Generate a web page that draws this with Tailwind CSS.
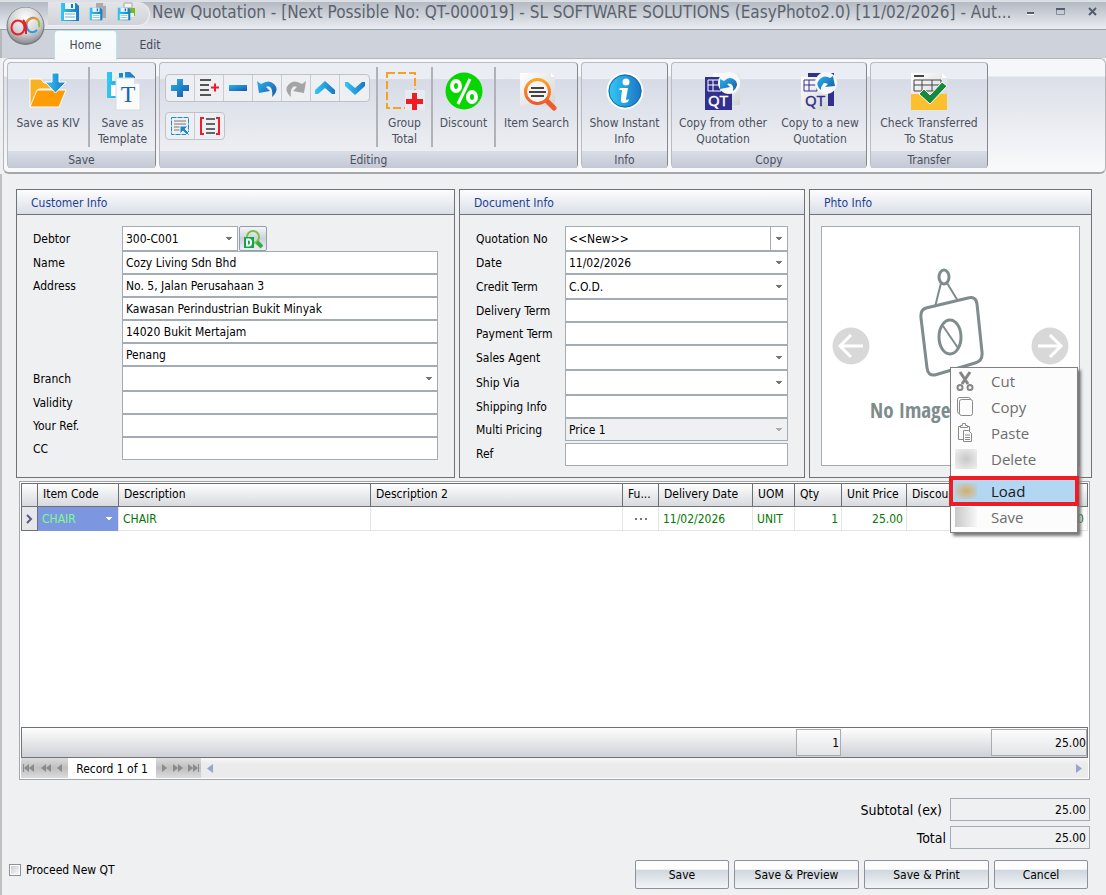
<!DOCTYPE html>
<html lang="en">
<head>
  <meta charset="UTF-8" />
  <meta name="viewport" content="width=device-width, initial-scale=1.0" />
  <title>New Quotation</title>
  <script src="https://cdn.jsdelivr.net/npm/@tailwindcss/browser@4"></script>
</head>
<body class="min-h-screen flex flex-col bg-[#eff0f2] text-black text-[12px] leading-4 font-['DejaVu_Sans_Condensed','DejaVu_Sans',sans-serif]">

  <!-- Shared shapes -->
  <svg class="absolute w-0 h-0">
    <defs>
      <linearGradient id="blue" x1="0" y1="0" x2="1" y2="1"><stop offset="0" stop-color="#27b4ee"/><stop offset="1" stop-color="#1a56a5"/></linearGradient>
      <linearGradient id="sky" x1="0" y1="0" x2="1" y2="0"><stop offset="0" stop-color="#35c8f4"/><stop offset="1" stop-color="#1976c4"/></linearGradient>
      <linearGradient id="orange" x1="0" y1="0" x2="0" y2="1"><stop offset="0" stop-color="#fba52b"/><stop offset="1" stop-color="#ee5a2a"/></linearGradient>
      <linearGradient id="sheet" x1="0" y1="0" x2="1" y2="1"><stop offset="0" stop-color="#ffffff"/><stop offset="1" stop-color="#d3d4d6"/></linearGradient>
      <radialGradient id="metal" cx="0.5" cy="0.3" r="0.7"><stop offset="0" stop-color="#ffffff"/><stop offset="0.6" stop-color="#d3d3d5"/><stop offset="1" stop-color="#8d8e92"/></radialGradient>
    </defs>
    <symbol id="caret" viewBox="0 0 6 4"><path d="M0 0h6v1H5v1H4v1H2V2H1V1H0z" fill="currentColor"/></symbol>
    <symbol id="floppy" viewBox="0 0 20 20"><path d="M1 1h15l3 3v15H1z" fill="url(#sky)"/><path d="M5 1h10v6H5z" fill="#e9f6fd"/><path d="M11 2h2v4h-2z" fill="#1976c4"/><path d="M4 10h12v8H4z" fill="#fff"/><path d="M5 12h10M5 15h10" stroke="#55b6e6"/></symbol>
  </svg>

  <!-- Title bar -->
  <header class="relative h-[30px] shrink-0 flex items-start border-b border-[#9ba1ab] bg-linear-to-b from-[#b4bac3] to-[#eaedf3] border-t-2 border-t-[#dcdfe3]">
    <button aria-label="Application menu" class="absolute left-1.5 top-1 z-10">
      <svg width="40" height="40" viewBox="0 0 40 40"><circle cx="19.500" cy="20" r="19" fill="#77797d"/><circle cx="19.500" cy="19.500" r="18" fill="url(#metal)"/><g fill="none" stroke-width="2"><path d="M31 24q-4 4-8 1-4-4-2-9 3-5 8-4" stroke="#2b9be0"/><path d="M20 18q2-6 8-6 2 0 4 2" stroke="#f08a24"/><path d="M32 14q2 3 1 7" stroke="#8cc63f"/><ellipse cx="12" cy="21.500" rx="6.500" ry="7" stroke="#e8202b"/><path d="M17 14q3 3 3 8v6" stroke="#e8202b"/></g></svg>
    </button>
    <div class="ml-12 h-6 w-[102px] shrink-0 flex items-start gap-2 pl-3 rounded-r-full bg-linear-to-b from-[#e3e5e8] to-[#d0d3d8] border border-l-0 border-t-0 border-[#f1f2f4]">
      <button aria-label="Save"><svg width="20" height="20"><use href="#floppy"/></svg></button>
      <button aria-label="Save and copy"><svg width="20" height="20" viewBox="0 0 20 20"><path d="M8 1h7l3 3v12H8z" fill="#a9abae"/><path d="M15 1v3h3" fill="#dcdddf"/><svg x="1" y="5" width="14" height="14"><use href="#floppy"/></svg></svg></button>
      <button aria-label="Save and print"><svg width="20" height="20" viewBox="0 0 20 20"><path d="M8 1h8v5H8z" fill="#f4f4f4" stroke="#a5a5a5"/><path d="M6 6h13v8H6z" fill="#76b82a"/><path d="M11 11h7v4h-7z" fill="#e8f2dc"/><svg x="1" y="5" width="14" height="14"><use href="#floppy"/></svg></svg></button>
    </div>
    <h1 class="flex-1 min-w-0 pl-0.5 truncate text-[17px] leading-5 text-[#5c636d]">New Quotation - [Next Possible No: QT-000019] - SL SOFTWARE SOLUTIONS (EasyPhoto2.0) [11/02/2026] - Aut...</h1>
    <div class="flex items-center gap-5 h-5 pl-3 pr-2 text-[#535d6d]">
      <button aria-label="Minimize"><svg width="10" height="10"><path d="M2 5h7v2H2z" fill="currentColor"/><path d="M2 7h7v1H2z" fill="#fff"/></svg></button>
      <button aria-label="Maximize"><svg width="12" height="10"><path d="M1.500 1.500h8v6h-8z" fill="none" stroke="#858d9a"/><path d="M1 1h9v2H1z" fill="currentColor"/></svg></button>
      <button aria-label="Close"><svg width="11" height="10"><path d="M2 1l7 7M9 1L2 8" stroke="currentColor" stroke-width="2"/></svg></button>
    </div>
  </header>

  <!-- Tabs -->
  <nav class="h-7 shrink-0 flex items-start pl-[54px] bg-[#ced2db] border-l-2 border-[#b5b7bb] text-[#454a57]">
    <button class="relative z-10 h-[30px] w-[63px] -ml-0.5 pb-0.5 rounded-t border border-b-0 border-[#b9e3e6] bg-linear-to-b from-[#f7fdfd] to-[#f6f8fa]">Home</button>
    <button class="h-[30px] w-[66px]">Edit</button>
  </nav>

  <!-- Ribbon -->
  <section class="h-[116px] shrink-0 ml-[3px] p-[3px] pb-1 flex gap-[3px] rounded-md border border-[#b3b5b9] border-b-2 border-b-[#a5a6a9] bg-linear-to-b from-[#f6f7fa] from-15% via-[#dbdfe8] via-16% to-[#fafafb] text-[#4c505d] text-center">

    <div class="w-[149px] flex flex-col rounded-sm border border-[#b9bbc1] border-r-[#86888d] border-b-[#86888d] bg-linear-to-b from-[#eaedf3] from-15% via-[#d6dbe6] via-16% to-[#f2f3f5]">
      <div class="flex-1 flex py-1">
        <button class="w-20 flex flex-col items-center gap-1 pt-1">
          <svg width="40" height="40" viewBox="0 0 40 40"><path d="M2 8h11l3 4h15v6H11L4 35H2z" fill="#f9b122" stroke="#fff"/><path d="M9 19h29l-7 17H2z" fill="#ff9c05" stroke="#fff"/><path d="M24 2h7v9h7L27.500 22 17 11h7z" fill="url(#sky)" stroke="#fff"/></svg>
          <span>Save as KIV</span>
        </button>
        <div class="w-0.5 bg-[#b0b2b8]"></div>
        <button class="flex-1 flex flex-col items-center gap-1 pt-1">
          <svg width="40" height="40" viewBox="0 0 40 40"><path d="M4 1h23l5 5v21H4z" fill="url(#sky)"/><path d="M9 1h13v9H9z" fill="#e4f2fa"/><path d="M16 2h4v6h-4z" fill="#1f86cd"/><path d="M8 14h12v11H8z" fill="#fff"/><path d="M13 7h18l6 6v26H13z" fill="#fafbfc" stroke="#d8dadd"/><path d="M31 7v6h6" fill="#dfe1e4"/><text x="25" y="31" text-anchor="middle" font-family="Liberation Serif,serif" font-size="24" fill="#1b66ae">T</text></svg>
          <span>Save as<br>Template</span>
        </button>
      </div>
      <div class="h-[17px] leading-[18px] bg-linear-to-b from-[#d9dde7] to-[#c4c8d3]">Save</div>
    </div>

    <div class="w-[419px] flex flex-col rounded-sm border border-[#b9bbc1] border-r-[#86888d] border-b-[#86888d] bg-linear-to-b from-[#eaedf3] from-15% via-[#d6dbe6] via-16% to-[#f2f3f5]">
      <div class="flex-1 flex py-1">
        <div class="w-[216px] flex flex-col items-start gap-2.5 pl-[5px] pt-[7px]">
          <div class="flex divide-x divide-[#c9ccd2] border border-[#bfc2c8] rounded-sm bg-[#edeff2]">
            <button aria-label="Add row" class="w-[29px] h-[26px] grid place-items-center"><svg width="20" height="20"><path d="M7 1h6v6h6v6h-6v6H7v-6H1V7h6z" fill="url(#blue)"/></svg></button>
            <button aria-label="Insert row" class="w-[29px] h-[26px] grid place-items-center"><svg width="20" height="20"><path d="M1 2h11M1 7h9M1 12h9M1 17h11" stroke="#555" stroke-width="2"/><path d="M12 9.500h8M16 5.500v8" stroke="#ee1c2a" stroke-width="2"/></svg></button>
            <button aria-label="Remove row" class="w-[29px] h-[26px] grid place-items-center"><svg width="20" height="20"><path d="M1 7h18v6H1z" fill="url(#blue)"/></svg></button>
            <button aria-label="Undo" class="w-[29px] h-[26px] grid place-items-center"><svg width="20" height="20"><path d="M0 3l4 3q8-5 13 0 6 6-2 13 1-6-1-9-2-3-5-1l4 4-11 2z" fill="url(#blue)"/></svg></button>
            <button aria-label="Redo" class="w-[29px] h-[26px] grid place-items-center"><svg width="20" height="20"><path d="M20 3l-4 3Q8 1 3 6q-6 6 2 13-1-6 1-9 2-3 5-1l-4 4 11 2z" fill="#a3a4a6"/></svg></button>
            <button aria-label="Move up" class="w-[29px] h-[26px] grid place-items-center"><svg width="20" height="20"><path d="M10 3l10 9v4h-3l-7-6-7 6H0v-4z" fill="url(#sky)"/></svg></button>
            <button aria-label="Move down" class="w-[29px] h-[26px] grid place-items-center"><svg width="20" height="20"><path d="M10 17L0 8V4h3l7 6 7-6h3v4z" fill="url(#sky)"/></svg></button>
          </div>
          <div class="flex divide-x divide-[#c9ccd2] border border-[#bfc2c8] rounded-sm bg-[#edeff2]">
            <button aria-label="Select rows" class="w-[29px] h-[26px] grid place-items-center"><svg width="20" height="20"><path d="M1.500 1.500h17v17h-17z" fill="none" stroke="#2389cc" stroke-dasharray="5 1"/><path d="M4 5h12M4 8h12M4 11h7M4 14h6" stroke="#777"/><path d="M10 10h8l-3 3 4 4-2 2-4-4-3 3z" fill="#1d87d0" stroke="#edeff2"/></svg></button>
            <button aria-label="Select range" class="w-[29px] h-[26px] grid place-items-center"><svg width="20" height="20"><path d="M4 2H1v16h3M16 2h3v16h-3" fill="none" stroke="#ee1c2a" stroke-width="2"/><path d="M6 3h9M6 8h9M6 13h9M6 17h9" stroke="#666" stroke-width="2"/></svg></button>
          </div>
        </div>
        <div class="w-0.5 bg-[#b0b2b8]"></div>
        <button class="w-[53px] flex flex-col items-center gap-1 pt-1">
          <svg width="40" height="40" viewBox="0 0 40 40"><path d="M2 2h28v35H2z" fill="none" stroke="#faa021" stroke-width="2" stroke-dasharray="8 3"/><path d="M20 19h20v20H20z" fill="#e7eaef"/><path d="M27 22h5v6h6v5h-6v6h-5v-6h-6v-5h6z" fill="#ee1c25"/></svg>
          <span>Group<br>Total</span>
        </button>
        <div class="w-0.5 bg-[#b0b2b8]"></div>
        <button class="w-[61px] flex flex-col items-center gap-1 pt-1">
          <svg width="40" height="40" viewBox="0 0 40 40"><circle cx="20" cy="20" r="18.500" fill="#08d600"/><g fill="none" stroke="#fff" stroke-width="4"><ellipse cx="12" cy="15" rx="4" ry="5"/><ellipse cx="28" cy="26" rx="4" ry="5"/><path d="M26 8L14 33" stroke-width="3"/></g></svg>
          <span>Discount</span>
        </button>
        <div class="w-0.5 bg-[#b0b2b8]"></div>
        <button class="flex-1 flex flex-col items-center gap-1 pt-1">
          <svg width="40" height="40" viewBox="0 0 40 40"><path d="M3 2h31l4 4v29H3z" fill="url(#sheet)"/><path d="M34 2v4h4" fill="#fff"/><path d="M29 29l8 8" stroke="#ee5a2a" stroke-width="5" stroke-linecap="round"/><circle cx="20.500" cy="20.500" r="12" fill="#f4f4f4" stroke="url(#orange)" stroke-width="3"/><path d="M14 17h13M12 21h17M14 25h13" stroke="#444" stroke-width="2"/></svg>
          <span>Item Search</span>
        </button>
      </div>
      <div class="h-[17px] leading-[18px] bg-linear-to-b from-[#d9dde7] to-[#c4c8d3]">Editing</div>
    </div>

    <div class="w-[87px] flex flex-col rounded-sm border border-[#b9bbc1] border-r-[#86888d] border-b-[#86888d] bg-linear-to-b from-[#eaedf3] from-15% via-[#d6dbe6] via-16% to-[#f2f3f5]">
      <div class="flex-1 flex py-1">
        <button class="flex-1 flex flex-col items-center gap-1 pt-1">
          <svg width="40" height="40" viewBox="0 0 40 40"><circle cx="20" cy="20" r="18.500" fill="#fff"/><circle cx="20" cy="20" r="16.500" fill="url(#sky)"/><circle cx="20" cy="20" r="16" fill="none" stroke="#1668b4"/><circle cx="21" cy="11" r="3.500" fill="#fff"/><path d="M15 17h8l-2 11q0 2 3 0l-1 3q-8 3-7-3l1-9h-3z" fill="#fff"/></svg>
          <span>Show Instant<br>Info</span>
        </button>
      </div>
      <div class="h-[17px] leading-[18px] bg-linear-to-b from-[#d9dde7] to-[#c4c8d3]">Info</div>
    </div>

    <div class="w-[196px] flex flex-col rounded-sm border border-[#b9bbc1] border-r-[#86888d] border-b-[#86888d] bg-linear-to-b from-[#eaedf3] from-15% via-[#d6dbe6] via-16% to-[#f2f3f5]">
      <div class="flex-1 flex py-1">
        <button class="w-[102px] flex flex-col items-center gap-1 pt-1">
          <svg width="40" height="40" viewBox="0 0 40 40"><path d="M10 2h27v32H10z" fill="url(#sheet)"/><path d="M2 6h27v33H2z" fill="#32308f"/><path d="M5 9h13v11H5zM5 14h15M10 9v11" fill="none" stroke="#fff"/><circle cx="26" cy="12" r="11" fill="#f7f8f9"/><path d="M17 8l4 2q6-6 12 0 3 5-3 10 1-5-2-7-2-1-4 0l3 3-10 2z" fill="url(#blue)"/><text x="15" y="35" text-anchor="middle" font-family="Open Sans,sans-serif" font-size="15" fill="#fff" stroke="#fff" stroke-width="0.500">QT</text></svg>
          <span>Copy from other<br>Quotation</span>
        </button>
        <button class="flex-1 flex flex-col items-center gap-1 pt-1">
          <svg width="40" height="40" viewBox="0 0 40 40"><path d="M8 2h26v33H8z" fill="#32308f"/><path d="M1 6h27v33H1z" fill="url(#sheet)"/><path d="M4 9h13v11H4zM4 14h15M9 9v11" fill="none" stroke="#32308f"/><circle cx="26" cy="12" r="11" fill="#f7f8f9"/><path d="M33 5l2 10-10 1 3-3q-4-2-5 0-2 2-2 6-6-5-2-10 5-6 11-2z" fill="url(#blue)"/><text x="15" y="35" text-anchor="middle" font-family="Open Sans,sans-serif" font-size="15" fill="#32308f" stroke="#32308f" stroke-width="0.500">QT</text></svg>
          <span>Copy to a new<br>Quotation</span>
        </button>
      </div>
      <div class="h-[17px] leading-[18px] bg-linear-to-b from-[#d9dde7] to-[#c4c8d3]">Copy</div>
    </div>

    <div class="w-[118px] flex flex-col rounded-sm border border-[#b9bbc1] border-r-[#86888d] border-b-[#86888d] bg-linear-to-b from-[#eaedf3] from-15% via-[#d6dbe6] via-16% to-[#f2f3f5]">
      <div class="flex-1 flex py-1">
        <button class="flex-1 flex flex-col items-center gap-1 pt-1">
          <svg width="40" height="40" viewBox="0 0 40 40"><path d="M2 2h31l5 5v20H2z" fill="url(#sheet)"/><path d="M33 2v5h5" fill="#fff"/><path d="M2 23h36v16H2z" fill="#fcc02f"/><path d="M5 5h10" stroke="#444" stroke-width="2"/><path d="M5 9h27v11H5zM5 14h27M13 9v11M23 9v11" fill="none" stroke="#444"/><path d="M10 23l5-5 6 6L33 11l5 4-17 18z" fill="#158a3c" stroke="#fff"/></svg>
          <span>Check Transferred<br>To Status</span>
        </button>
      </div>
      <div class="h-[17px] leading-[18px] bg-linear-to-b from-[#d9dde7] to-[#c4c8d3]">Transfer</div>
    </div>
  </section>

  <main class="flex-1 flex flex-col border-l-2 border-[#bfc0c2] pl-3.5 pr-3.5 pt-[15px]">

    <div class="grid grid-cols-[minmax(0,439fr)_minmax(0,346fr)_minmax(0,283fr)] gap-1 h-[289px]">
      <!-- Customer Info -->
      <section class="border border-[#707276]">
        <h2 class="h-[25px] pl-3.5 leading-[26px] text-[#1c3f94] border-b border-[#707276] bg-linear-to-b from-[#fdfdfe] to-[#d9dee7]">Customer Info</h2>
        <div class="grid grid-cols-[89px_1fr] items-center pl-4 pr-4 pt-[11px]">
          <label for="debtor">Debtor</label>
          <div class="flex gap-px">
            <div class="relative w-[116px]">
              <select id="debtor" class="appearance-none block w-full h-[25px] px-[3px] bg-white border border-[#a3acb5]"><option>300-C001</option></select>
              <svg class="absolute right-1.5 top-[11px] text-[#777]" width="6" height="4"><use href="#caret"/></svg>
            </div>
            <button aria-label="Find debtor" class="w-7 h-[25px] grid place-items-center rounded-xs border border-[#979cab] bg-linear-to-b from-[#f5f6f9] via-[#ccd2dd] to-[#eceef2]"><svg width="20" height="20"><circle cx="10" cy="8" r="6" fill="none" stroke="#7ac043" stroke-width="2"/><path d="M14 13l5 5" stroke="#39a845" stroke-width="4"/><path d="M1 8h10v11H1z" fill="#12a64a"/><path d="M4 10.500h2q2 0 2 3t-2 3H4z" fill="none" stroke="#fff" stroke-width="2"/></svg></button>
          </div>
          <label for="name">Name</label>
          <input id="name" value="Cozy Living Sdn Bhd" class="w-full h-[23px] px-[3px] bg-white border border-[#a3acb5]">
          <label for="address1">Address</label>
          <input id="address1" value="No. 5, Jalan Perusahaan 3" class="w-full h-[23px] px-[3px] bg-white border border-[#a3acb5]">
          <input aria-label="Address line 2" value="Kawasan Perindustrian Bukit Minyak" class="col-start-2 w-full h-[23px] px-[3px] bg-white border border-[#a3acb5]">
          <input aria-label="Address line 3" value="14020 Bukit Mertajam" class="col-start-2 w-full h-[23px] px-[3px] bg-white border border-[#a3acb5]">
          <input aria-label="Address line 4" value="Penang" class="col-start-2 w-full h-[23px] px-[3px] bg-white border border-[#a3acb5]">
          <label for="branch">Branch</label>
          <div class="relative">
            <select id="branch" class="appearance-none block w-full h-[25px] px-[3px] bg-white border border-[#a3acb5]"><option></option></select>
            <svg class="absolute right-1.5 top-[11px] text-[#777]" width="6" height="4"><use href="#caret"/></svg>
          </div>
          <label for="validity">Validity</label>
          <input id="validity" class="w-full h-[23px] px-[3px] bg-white border border-[#a3acb5]">
          <label for="yourref">Your Ref.</label>
          <input id="yourref" class="w-full h-[23px] px-[3px] bg-white border border-[#a3acb5]">
          <label for="cc">CC</label>
          <input id="cc" class="w-full h-[23px] px-[3px] bg-white border border-[#a3acb5]">
        </div>
      </section>

      <!-- Document Info -->
      <section class="border border-[#707276]">
        <h2 class="h-[25px] pl-3.5 leading-[26px] text-[#1c3f94] border-b border-[#707276] bg-linear-to-b from-[#fdfdfe] to-[#d9dee7]">Document Info</h2>
        <div class="grid grid-cols-[89px_1fr] items-center pl-4 pr-4 pt-[11px]">
          <label for="qno">Quotation No</label>
          <div class="flex h-[25px] bg-white border border-[#a3acb5]">
            <input id="qno" value="&lt;&lt;New&gt;&gt;" class="flex-1 min-w-0 px-[3px]">
            <button aria-label="Choose number" class="w-[17px] grid place-items-center border-l border-[#a3acb5] text-[#777]"><svg width="6" height="4"><use href="#caret"/></svg></button>
          </div>
          <label for="date">Date</label>
          <div class="flex h-[23px] bg-white border border-[#a3acb5]">
            <input id="date" value="11/02/2026" class="flex-1 min-w-0 px-[3px]">
            <button aria-label="Choose date" class="w-[17px] grid place-items-center text-[#777]"><svg width="6" height="4"><use href="#caret"/></svg></button>
          </div>
          <label for="credit">Credit Term</label>
          <div class="relative">
            <select id="credit" class="appearance-none block w-full h-[25px] px-[3px] bg-white border border-[#a3acb5]"><option>C.O.D.</option></select>
            <svg class="absolute right-1.5 top-[11px] text-[#777]" width="6" height="4"><use href="#caret"/></svg>
          </div>
          <label for="delivery">Delivery Term</label>
          <input id="delivery" class="w-full h-[23px] px-[3px] bg-white border border-[#a3acb5]">
          <label for="payment">Payment Term</label>
          <input id="payment" class="w-full h-[23px] px-[3px] bg-white border border-[#a3acb5]">
          <label for="agent">Sales Agent</label>
          <div class="relative">
            <select id="agent" class="appearance-none block w-full h-[25px] px-[3px] bg-white border border-[#a3acb5]"><option></option></select>
            <svg class="absolute right-1.5 top-[11px] text-[#777]" width="6" height="4"><use href="#caret"/></svg>
          </div>
          <label for="shipvia">Ship Via</label>
          <div class="relative">
            <select id="shipvia" class="appearance-none block w-full h-[25px] px-[3px] bg-white border border-[#a3acb5]"><option></option></select>
            <svg class="absolute right-1.5 top-[11px] text-[#777]" width="6" height="4"><use href="#caret"/></svg>
          </div>
          <label for="shipinfo">Shipping Info</label>
          <input id="shipinfo" class="w-full h-[23px] px-[3px] bg-white border border-[#a3acb5]">
          <label for="pricing">Multi Pricing</label>
          <div class="relative">
            <select id="pricing" disabled class="appearance-none block w-full h-[23px] px-[3px] bg-[#eff0f2] border border-[#a3acb5] text-black opacity-100"><option>Price 1</option></select>
            <svg class="absolute right-1.5 top-2.5 text-[#aaa]" width="6" height="4"><use href="#caret"/></svg>
          </div>
          <label for="ref">Ref</label>
          <input id="ref" class="w-full h-[23px] mt-0.5 px-[3px] bg-white border border-[#a3acb5]">
        </div>
      </section>

      <!-- Photo Info -->
      <section class="border border-[#707276] flex flex-col">
        <h2 class="h-[25px] shrink-0 pl-3.5 leading-[26px] text-[#1c3f94] border-b border-[#707276] bg-linear-to-b from-[#fdfdfe] to-[#d9dee7]">Phto Info</h2>
        <div class="relative flex-1 m-[11px] flex items-center justify-between px-2.5 bg-white border border-[#a3acb5]">
          <button aria-label="Previous photo"><svg width="38" height="38" fill="none" stroke="#fff" stroke-width="3"><circle cx="19" cy="19" r="18.500" fill="#d8d8d8" stroke="none"/><path d="M31 19H8M19 8L8 19l11 11"/></svg></button>
          <div class="flex-1 min-w-0 flex flex-col text-[#7f8c8d] whitespace-nowrap">
            <svg class="self-center" width="66" height="124" viewBox="0 0 66 124" fill="none" stroke="currentColor" stroke-width="2"><ellipse cx="26" cy="9" rx="5" ry="7" stroke-width="3"/><path d="M23 15l-6 24M29 15l11 18"/><path d="M8 40l42-10q8-2 9 6l5 48q1 9-7 11l-40 12q-7 1-8-7L3 50q-1-8 5-10z" stroke-width="3"/><ellipse cx="32" cy="69" rx="11" ry="17" stroke-width="3"/><path d="M25 58l15 22"/></svg>
            <span class="-mb-1 font-['Open_Sans_Condensed','Roboto_Condensed','DejaVu_Sans_Condensed',sans-serif] font-bold text-[21px] leading-9">No Image</span>
          </div>
          <button aria-label="Next photo"><svg width="38" height="38" fill="none" stroke="#fff" stroke-width="3"><circle cx="19" cy="19" r="18.500" fill="#d8d8d8" stroke="none"/><path d="M7 19h23M19 8l11 11-11 11"/></svg></button>

          <!-- Photo context menu -->
          <div role="menu" class="absolute z-20 left-32 top-[140px] w-[128px] pb-0.5 border border-[#808080] bg-[#fcfcfc] shadow-[3px_3px_3px_#777] text-[15px] text-[#6d6d6d] font-['Open_Sans',sans-serif]">
            <button role="menuitem" class="w-full h-[26px] pl-1 flex items-center gap-3.5"><svg width="22" height="22" fill="none" stroke="#858585" stroke-width="2"><path d="M5 2l8 12M15 2L7 14" stroke-width="3"/><circle cx="5" cy="17.500" r="2.500"/><circle cx="15" cy="17.500" r="2.500"/></svg>Cut</button>
            <button role="menuitem" class="w-full h-[26px] pl-1 flex items-center gap-3.5"><svg width="22" height="22" fill="#fcfcfc" stroke="#8a8a8a"><rect x="2.500" y="1.500" width="13" height="16" rx="2"/><rect x="4.500" y="3.500" width="13" height="16" rx="2"/></svg>Copy</button>
            <button role="menuitem" class="w-full h-[26px] pl-1 flex items-center gap-3.5"><svg width="22" height="22" fill="#fcfcfc" stroke="#8a8a8a"><path d="M3.500 4.500h11v13h-11z"/><path d="M5.500 5.500v-2h2v-2h3v2h2v2z"/><path d="M8.500 8.500h5l3 3v8h-8zM10 13h5M10 15.500h5M10 17.500h5"/></svg>Paste</button>
            <button role="menuitem" class="w-full h-[26px] pl-1 flex items-center gap-3.5"><span class="w-[22px] h-5 bg-radial from-[#c8c8c8] to-[#f1f1f1]"></span>Delete</button>
            <div class="h-1.5 ml-9 border-b border-[#b5b5b5]"></div>
            <button role="menuitem" class="w-full h-[26px] pl-1 flex items-center gap-3.5 bg-[#b3d7f2] text-[#1a1a1a] outline-4 -outline-offset-2 outline-[#ee1c25]"><span class="w-[22px] h-4 bg-radial from-[#d3ad65] to-[#b3d7f2]"></span>Load</button>
            <button role="menuitem" class="w-full h-[26px] pl-1 flex items-center gap-3.5"><span class="w-[22px] h-5 bg-linear-to-r from-[#c8c8c8] to-[#f7f7f7]"></span>Save</button>
          </div>
        </div>
      </section>
    </div>

    <!-- Detail grid -->
    <section class="flex-1 mt-[3px] ml-[3px] mr-0.5 flex flex-col bg-white border border-[#a4a6a9] p-px">
      <table class="w-full table-fixed border-collapse text-[#007a00]">
        <colgroup>
          <col class="w-4"><col class="w-[81px]"><col class="w-[252px]"><col class="w-[252px]"><col class="w-9"><col class="w-[94px]"><col class="w-[42px]"><col class="w-[47px]"><col class="w-[65px]"><col class="w-[82px]"><col>
        </colgroup>
        <thead>
          <tr class="h-[23px] bg-linear-to-b from-[#fefefe] to-[#d6d8dc] text-black text-left whitespace-nowrap">
            <th class="border border-[#6d6f73]"></th>
            <th class="border border-[#6d6f73] pl-[5px] pb-0.5 font-normal">Item Code</th>
            <th class="border border-[#6d6f73] pl-[5px] pb-0.5 font-normal">Description</th>
            <th class="border border-[#6d6f73] pl-[5px] pb-0.5 font-normal">Description 2</th>
            <th class="border border-[#6d6f73] pl-[5px] pb-0.5 font-normal">Fu...</th>
            <th class="border border-[#6d6f73] pl-[5px] pb-0.5 font-normal">Delivery Date</th>
            <th class="border border-[#6d6f73] pl-[5px] pb-0.5 font-normal">UOM</th>
            <th class="border border-[#6d6f73] pl-[5px] pb-0.5 font-normal">Qty</th>
            <th class="border border-[#6d6f73] pl-[5px] pb-0.5 font-normal">Unit Price</th>
            <th class="border border-[#6d6f73] pl-[5px] pb-0.5 font-normal">Discount</th>
            <th class="border border-[#6d6f73]" aria-label="Subtotal"></th>
          </tr>
        </thead>
        <tbody>
          <tr class="h-6">
            <td class="border border-[#6d6f73] bg-[#e5e7ea]"><svg class="mx-auto" width="7" height="10"><path d="M1 1l4 4-4 4" fill="none" stroke="#5a5b82" stroke-width="2"/></svg></td>
            <td class="bg-[#7c97df] text-[#7cfc8a] pl-1"><div class="flex items-center justify-between pr-1.5">CHAIR<svg class="text-white" width="6" height="4"><use href="#caret"/></svg></div></td>
            <td class="border border-[#e3e4e6] pl-1">CHAIR</td>
            <td class="border border-[#e3e4e6]"></td>
            <td class="border border-[#e3e4e6] text-center"><svg class="mx-auto" width="12" height="2"><path d="M0 0h2v2H0zM5 0h2v2H5zM10 0h2v2h-2z" fill="#777"/></svg></td>
            <td class="border border-[#e3e4e6] pl-1">11/02/2026</td>
            <td class="border border-[#e3e4e6] pl-1">UNIT</td>
            <td class="border border-[#e3e4e6] pr-[3px] text-right">1</td>
            <td class="border border-[#e3e4e6] pr-[3px] text-right">25.00</td>
            <td class="border border-[#e3e4e6]"></td>
            <td class="border border-[#e3e4e6] pr-[3px] text-right">25.00</td>
          </tr>
        </tbody>
      </table>
      <div class="flex-1"></div>
      <div class="h-[31px] flex items-center justify-end border border-[#707276] bg-linear-to-b from-[#fefefe] to-[#cfd1d6] text-right">
        <output class="w-[45px] h-[27px] mr-[150px] pr-px leading-[27px] border border-[#a9abaf] bg-white/40">1</output>
        <output class="w-24 h-[27px] leading-[27px] border border-[#a9abaf] bg-white/40">25.00</output>
      </div>
      <div class="h-5 flex bg-[#ededee]">
        <div class="w-[47px] flex items-center justify-between px-0.5 bg-linear-to-b from-[#dcdcdc] via-[#bfbfbf] to-[#dcdcdc]">
          <button aria-label="First"><svg width="11" height="8" fill="#8b8b8b"><path d="M0 0h1v8H0zM6 0v8L1 4zM11 0v8L6 4z"/></svg></button>
          <button aria-label="Previous page"><svg width="10" height="8" fill="#8b8b8b"><path d="M5 0v8L0 4zM10 0v8L5 4z"/></svg></button>
          <button aria-label="Previous"><svg width="9" height="8" fill="#8b8b8b"><path d="M5 0v8L0 4z"/></svg></button>
        </div>
        <span class="w-[88px] text-center leading-[22px] bg-white">Record 1 of 1</span>
        <div class="w-[45px] flex items-center justify-between px-0.5 bg-linear-to-b from-[#dcdcdc] via-[#bfbfbf] to-[#dcdcdc]">
          <button aria-label="Next"><svg width="9" height="8" fill="#8b8b8b"><path d="M4 0v8l5-4z"/></svg></button>
          <button aria-label="Next page"><svg width="10" height="8" fill="#8b8b8b"><path d="M0 0v8l5-4zM5 0v8l5-4z"/></svg></button>
          <button aria-label="Last"><svg width="11" height="8" fill="#8b8b8b"><path d="M0 0v8l5-4zM5 0v8l5-4zM10 0h1v8h-1z"/></svg></button>
        </div>
        <div class="flex-1 flex items-center justify-between pl-1.5 pr-1.5 bg-linear-to-b from-[#f8f8f8] to-[#ebebec] to-30%">
          <button aria-label="Scroll left"><svg width="6" height="9" fill="#98a5c9"><path d="M6 0v9L0 4.500z"/></svg></button>
          <button aria-label="Scroll right"><svg width="6" height="9" fill="#98a5c9"><path d="M0 0v9l6-4.500z"/></svg></button>
        </div>
      </div>
    </section>

    <!-- Totals -->
    <div class="flex flex-col items-end gap-[5px] pt-[18px] mr-0.5">
      <div class="flex items-center gap-2"><label for="subtotal" class="text-[14px]">Subtotal (ex)</label><input id="subtotal" readonly value="25.00" class="w-[140px] h-[23px] px-[3px] text-right border border-[#a3acb5]"></div>
      <div class="flex items-center gap-1"><label for="total" class="text-[14px]">Total</label><input id="total" readonly value="25.00" class="w-[140px] h-[23px] px-[3px] text-right border border-[#a3acb5]"></div>
    </div>

    <footer class="-ml-[7px] mr-1 mt-[11px] mb-1.5 flex items-start">
      <label class="flex items-center gap-[5px] mt-0.5 mr-auto"><input type="checkbox" class="appearance-none w-3 h-3 border border-[#8d9197] bg-linear-to-br from-[#c3c8cf] to-white shadow-[inset_0_0_0_1px_#fff]">Proceed New QT</label>
      <div class="flex gap-[5px]">
        <button class="w-[94px] h-[29px] rounded-xs border border-[#8b919f] bg-linear-to-b from-[#fdfdfe] from-30% via-[#d0d7df] via-35% to-[#f3f5f7]">Save</button>
        <button class="w-[125px] h-[29px] rounded-xs border border-[#8b919f] bg-linear-to-b from-[#fdfdfe] from-30% via-[#d0d7df] via-35% to-[#f3f5f7]">Save &amp; Preview</button>
        <button class="w-[125px] h-[29px] rounded-xs border border-[#8b919f] bg-linear-to-b from-[#fdfdfe] from-30% via-[#d0d7df] via-35% to-[#f3f5f7]">Save &amp; Print</button>
        <button class="w-[94px] h-[29px] rounded-xs border border-[#8b919f] bg-linear-to-b from-[#fdfdfe] from-30% via-[#d0d7df] via-35% to-[#f3f5f7]">Cancel</button>
      </div>
    </footer>
  </main>
</body>
</html>
